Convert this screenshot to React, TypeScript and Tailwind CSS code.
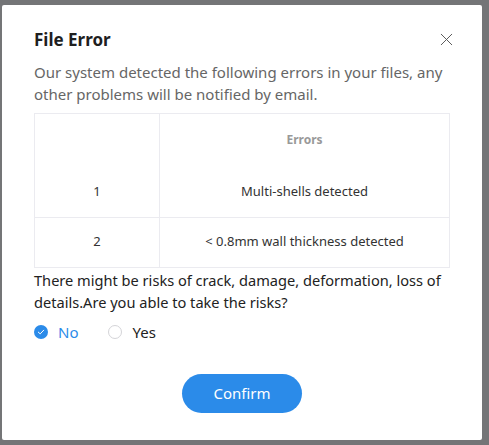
import { X } from 'lucide-react'
import { useState } from 'react'

const errors = [
  { id: 1, text: 'Multi-shells detected' },
  { id: 2, text: '< 0.8mm wall thickness detected' },
]

function Radio({ checked, label, onClick }: { checked: boolean; label: string; onClick: () => void }) {
  return (
    <button type="button" onClick={onClick} className="flex items-center gap-[10px]">
      {checked ? (
        <span className="flex h-[14px] w-[14px] items-center justify-center rounded-full bg-[#2b8be9]">
          <svg width="8" height="8" viewBox="0 0 8 8" fill="none">
            <path d="M1.3 4.1 3.2 5.9 6.7 2.2" stroke="white" strokeWidth="1" strokeLinecap="round" strokeLinejoin="round" />
          </svg>
        </span>
      ) : (
        <span className="h-[14px] w-[14px] rounded-full border border-[#d4d4d8] bg-white" />
      )}
      <span className={`text-[15px] ${checked ? 'text-[#2b8be9]' : 'text-[#222]'}`}>{label}</span>
    </button>
  )
}

export default function App() {
  const [accept, setAccept] = useState(false)

  return (
    <div className="h-[445px] w-[489px] bg-[#747577] pl-[2px] pt-[5px] font-['Noto_Sans',sans-serif]">
      <div className="flex h-[435px] w-[480px] flex-col rounded-[2px] bg-white px-[32px] pt-[22px]">
        <div className="flex items-center justify-between">
          <h2 className="text-[17px] font-bold text-[#1f1f1f]">File Error</h2>
          <X size={21} strokeWidth={1.1} className="mr-[-7px] text-[#555]" />
        </div>

        <p className="mt-[8px] text-[15px] leading-[22px] text-[#666]">
          Our system detected the following errors in your files, any other problems will be notified by email.
        </p>

        <table className="mt-[8px] w-full border-collapse border border-[#ebebf0] text-[13px] text-[#333]">
          <thead>
            <tr className="h-[54px]">
              <th className="w-[125px] border-r border-[#ebebf0]" />
              <th className="text-[12px] font-bold text-[#999]">Errors</th>
            </tr>
          </thead>
          <tbody>
            {errors.map((e, i) => (
              <tr key={e.id} className={`h-[50px] ${i > 0 ? 'border-t border-[#ebebf0]' : ''}`}>
                <td className="border-r border-[#ebebf0] text-center">{e.id}</td>
                <td className="text-center">{e.text}</td>
              </tr>
            ))}
          </tbody>
        </table>

        <p className="mt-[1px] text-[14.6px] leading-[22px] text-[#222]">
          There might be risks of crack, damage, deformation, loss of details.Are you able to take the risks?
        </p>

        <div className="mt-[8px] flex items-center gap-[30px]">
          <Radio checked={!accept} label="No" onClick={() => setAccept(false)} />
          <Radio checked={accept} label="Yes" onClick={() => setAccept(true)} />
        </div>

        <button
          type="button"
          className="mx-auto mt-[31px] h-[39px] w-[120px] rounded-full bg-[#2b8be9] text-[15px] text-white"
        >
          Confirm
        </button>
      </div>
    </div>
  )
}
